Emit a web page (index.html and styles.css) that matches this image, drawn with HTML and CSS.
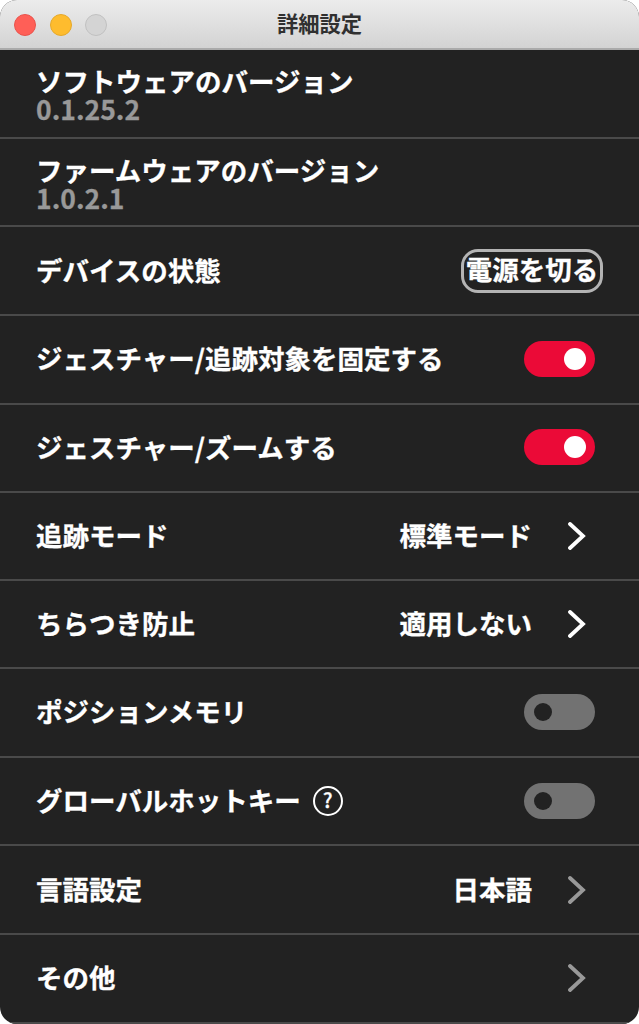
FILE: index.html
```html
<!DOCTYPE html>
<html lang="ja">
  <head>
    <meta charset="UTF-8" />
    <meta name="viewport" content="width=device-width,initial-scale=1.0" />
    <title>詳細設定</title>
    <link rel="stylesheet" href="styles.css">
  </head>
  <body>
    <div class="window">
      <header class="titlebar">
        <div class="lights">
          <span class="light close"></span>
          <span class="light minimize"></span>
          <span class="light disabled"></span>
        </div>
        <h1 class="heading">詳細設定</h1>
      </header>
      <main class="settings">
        <div class="row info">
          <div class="label">ソフトウェアのバージョン</div>
          <div class="version">0.1.25.2</div>
        </div>
        <div class="row info">
          <div class="label">ファームウェアのバージョン</div>
          <div class="version">1.0.2.1</div>
        </div>
        <div class="row">
          <div class="label">デバイスの状態</div>
          <button class="power-btn">電源を切る</button>
        </div>
        <div class="row">
          <div class="label">ジェスチャー/追跡対象を固定する</div>
          <div class="toggle on"><span class="knob"></span></div>
        </div>
        <div class="row">
          <div class="label">ジェスチャー/ズームする</div>
          <div class="toggle on"><span class="knob"></span></div>
        </div>
        <div class="row short">
          <div class="label">追跡モード</div>
          <div class="value">標準モード</div>
          <svg class="chevron" viewBox="0 0 18 28"><path d="M2 2 L15 14 L2 26" /></svg>
        </div>
        <div class="row">
          <div class="label">ちらつき防止</div>
          <div class="value">適用しない</div>
          <svg class="chevron" viewBox="0 0 18 28"><path d="M2 2 L15 14 L2 26" /></svg>
        </div>
        <div class="row">
          <div class="label">ポジションメモリ</div>
          <div class="toggle"><span class="knob"></span></div>
        </div>
        <div class="row">
          <div class="label">グローバルホットキー</div>
          <div class="help">?</div>
          <div class="toggle"><span class="knob"></span></div>
        </div>
        <div class="row">
          <div class="label">言語設定</div>
          <div class="value">日本語</div>
          <svg class="chevron dim" viewBox="0 0 18 28"><path d="M2 2 L15 14 L2 26" /></svg>
        </div>
        <div class="row">
          <div class="label">その他</div>
          <svg class="chevron dim" viewBox="0 0 18 28"><path d="M2 2 L15 14 L2 26" /></svg>
        </div>
      </main>
    </div>
  </body>
</html>
```
FILE: styles.css
```css
* {
  padding: 0;
  margin: 0;
  box-sizing: border-box;
  font-family: 'Noto Sans CJK JP', sans-serif;
}
body {
  background: #fff;
}
.window {
  height: 1024px;
  display: flex;
  flex-direction: column;
  overflow: hidden;
  border-radius: 17px;
  background: #222;
  color: #fff;
}

/* title bar */
.titlebar {
  height: 50px;
  flex: none;
  display: grid;
  grid-template-columns: 1fr auto 1fr;
  align-items: center;
  padding: 0 14px;
  background: linear-gradient(#ececec, #d3d3d3);
  border-bottom: 2px solid #aaa;
}
.lights {
  display: flex;
  gap: 13.6px;
  padding-top: 1px;
}
.light {
  width: 22px;
  height: 22px;
  border-radius: 50%;
  border: 1px solid;
}
.close {
  background: #ff5f57;
  border-color: #e8534c;
}
.minimize {
  background: #febc2e;
  border-color: #e5a82a;
}
.disabled {
  background: #d4d4d4;
  border-color: #c0c0c0;
}
.heading {
  padding-bottom: 2px;
  font-size: 21.3px;
  line-height: 30px;
  font-weight: 700;
  color: #303030;
}

/* settings list */
.settings {
  flex: 1;
}
.row {
  height: 88.65px;
  display: flex;
  align-items: center;
  padding: 0 36px;
  border-bottom: 2px solid #4a4a4a;
  font-size: 26.5px;
  line-height: 28px;
  font-weight: 700;
  -webkit-text-stroke: 0.3px;
}
.short {
  height: 87.3px;
}
.info {
  flex-direction: column;
  align-items: flex-start;
  justify-content: center;
  padding-top: 4px;
}
.label {
  margin-right: auto;
  padding-bottom: 2px;
}
.info .label {
  padding-bottom: 0;
}
.version {
  color: #999;
}
.value {
  margin-right: 36px;
  padding-bottom: 2px;
}
.power-btn {
  width: 142px;
  height: 44px;
  padding-bottom: 4px;
  border: 3px solid #b4b4b4;
  border-radius: 17px;
  background: transparent;
  color: #fff;
  font-size: 26.5px;
  font-weight: 700;
  line-height: 34px;
  white-space: nowrap;
  display: flex;
  justify-content: center;
  align-items: center;
}
.toggle {
  width: 71px;
  height: 36px;
  margin-right: 8px;
  margin-bottom: 1px;
  padding: 0 10px;
  border-radius: 18px;
  display: flex;
  align-items: center;
  background: #727272;
}
.knob {
  width: 18px;
  height: 18px;
  border-radius: 50%;
  background: #222;
}
.on {
  justify-content: flex-end;
  padding: 0 9px;
  background: #eb0a37;
}
.on .knob {
  width: 22px;
  height: 22px;
  background: #fff;
}
.chevron {
  width: 18px;
  height: 28px;
  margin-right: 17px;
  fill: none;
  stroke: #fff;
  stroke-width: 3.8;
  stroke-linecap: round;
}
.dim {
  stroke: #999;
}
.help {
  width: 30px;
  height: 30px;
  margin-left: 12px;
  margin-right: auto;
  margin-bottom: 1px;
  border: 2px solid #fff;
  border-radius: 50%;
  font-size: 20px;
  font-weight: 500;
  line-height: 24px;
  text-align: center;
}
.label:has(+ .help) {
  margin-right: 0;
}
```
